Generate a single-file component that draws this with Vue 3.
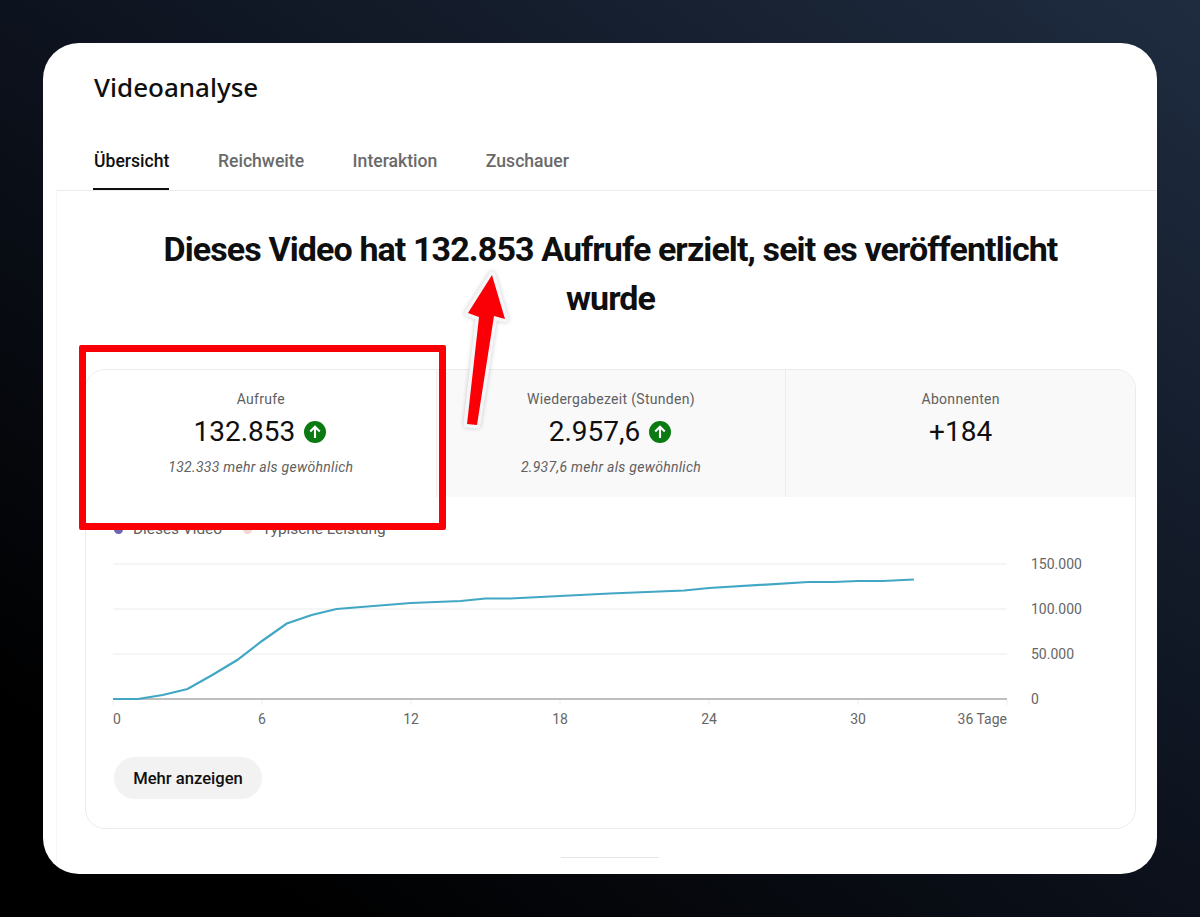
<script setup>
const stats = [
  { label: "Aufrufe", value: "132.853", up: true, note: "132.333 mehr als gewöhnlich", active: true },
  { label: "Wiedergabezeit (Stunden)", value: "2.957,6", up: true, note: "2.937,6 mehr als gewöhnlich" },
  { label: "Abonnenten", value: "+184" },
];

const tabs = ["Übersicht", "Reichweite", "Interaktion", "Zuschauer"];

// chart area is 894 wide, 36 days; y in px from the top of the svg
const dayWidth = 894 / 36;
const curve = [
  [0, 136], [1, 136], [2, 132], [3, 126], [4, 112], [5, 97], [6, 78], [7, 60.5], [8, 52], [9, 46],
  [10, 44], [11, 42], [12, 40], [14, 38], [15, 35.5], [16, 35.5], [18, 33], [20, 30.5], [23, 27.5],
  [24, 25], [28, 19], [29, 19], [30, 18], [31, 18], [32.25, 16.5],
];
const linePoints = curve.map(([d, y]) => `${(d * dayWidth).toFixed(1)},${y}`).join(" ");

const grid = [
  { y: 1, label: "150.000" },
  { y: 46, label: "100.000" },
  { y: 91, label: "50.000" },
  { y: 136, label: "0" },
];
const xTicks = [0, 6, 12, 18, 24, 30];
</script>

<template>
  <div class="page">
    <div class="card">
      <h1 class="title">Videoanalyse</h1>

      <nav class="tabs">
        <a v-for="(tab, i) in tabs" :key="tab" :class="['tab', { active: i === 0 }]">{{ tab }}</a>
      </nav>

      <div class="content">
        <h2 class="headline">Dieses Video hat 132.853 Aufrufe erzielt, seit es veröffentlicht wurde</h2>

        <section class="panel">
          <div class="stats">
            <div v-for="s in stats" :key="s.label" :class="['stat', { active: s.active }]">
              <div class="stat-label">{{ s.label }}</div>
              <div class="stat-value">
                <span>{{ s.value }}</span>
                <svg v-if="s.up" class="up" viewBox="0 0 24 24">
                  <circle cx="12" cy="12" r="12" fill="#0b7a12" />
                  <path d="M12 18.5V6.5M6.8 11.5 12 6.3l5.2 5.2" fill="none" stroke="#fff" stroke-width="2.3" />
                </svg>
              </div>
              <div v-if="s.note" class="stat-note">{{ s.note }}</div>
            </div>
          </div>

          <div class="chart-wrap">
            <div class="legend">
              <span class="legend-item"><i class="dot purple"></i>Dieses Video</span>
              <span class="legend-item"><i class="dot pale"></i>Typische Leistung</span>
            </div>

            <svg class="chart" width="1000" height="165" viewBox="0 0 1000 165">
              <g v-for="g in grid" :key="g.label">
                <line
                  x1="0"
                  x2="894"
                  :y1="g.y"
                  :y2="g.y"
                  :stroke="g.y === 136 ? '#a8a8a8' : '#ebebeb'"
                  :stroke-width="g.y === 136 ? 1.5 : 1"
                />
                <text class="axis" x="918" :y="g.y + 5">{{ g.label }}</text>
              </g>
              <g v-for="t in xTicks" :key="t">
                <line :x1="t * dayWidth" :x2="t * dayWidth" y1="137" y2="142" stroke="#eeeeee" />
                <text class="axis" :x="t * dayWidth" y="161" :text-anchor="t === 0 ? 'start' : 'middle'">{{ t }}</text>
              </g>
              <line x1="894" x2="894" y1="137" y2="142" stroke="#eeeeee" />
              <text class="axis" x="894" y="161" text-anchor="end">36 Tage</text>
              <polyline :points="linePoints" fill="none" stroke="#41a7c4" stroke-width="2.2" />
            </svg>

            <button class="more">Mehr anzeigen</button>
          </div>
        </section>

        <div class="stub"></div>
      </div>

      <!-- annotations on top of the screenshot -->
      <div class="red-box"></div>
      <svg class="arrow" width="70" height="170" viewBox="0 0 70 170">
        <path
          d="M41 12 L54 56 L43 53 L26 162 L16 161 L28 54 L17 50 Z"
          fill="#fa0006"
          stroke="#f4f6f8"
          stroke-width="7"
          stroke-linejoin="round"
          paint-order="stroke"
        />
      </svg>
    </div>
  </div>
</template>

<style>
body {
  background: #000;
}
</style>

<style scoped>
.page {
  box-sizing: border-box;
  width: 1200px;
  height: 917px;
  padding: 43px;
  background: linear-gradient(35deg, #000 12%, #0e1420 55%, #1f2c40 100%);
  font-family: Roboto, "Liberation Sans", sans-serif;
  overflow: hidden;
}

.card {
  position: relative;
  height: 831px;
  background: #fff;
  border-radius: 36px;
  overflow: hidden;
}

.title {
  margin: 0;
  padding: 25px 0 0 51px;
  font-family: "Noto Sans", Roboto, sans-serif;
  font-size: 26px;
  line-height: 38px;
  font-weight: 500;
  color: #0f0f0f;
}

.tabs {
  display: flex;
  gap: 47.5px;
  margin: 31px 0 0 13px;
  padding-left: 37px;
  height: 53px;
  border-bottom: 1px solid #ececec;
}

.tab {
  height: 53px;
  box-sizing: border-box;
  padding: 12px 0 0 1px;
  font-size: 17.6px;
  line-height: 24px;
  font-weight: 500;
  color: #6a6a6a;
}

.tab.active {
  color: #0f0f0f;
  border-bottom: 2px solid #0f0f0f;
}

.content {
  margin-left: 13px;
  padding: 34px 21px 0 28px;
  border-left: 1px solid #f6f6f6;
  height: 644px;
}

.headline {
  width: 940px;
  margin: 0 auto;
  text-align: center;
  font-size: 34px;
  line-height: 49px;
  font-weight: 700;
  letter-spacing: -0.9px;
  color: #0f0f0f;
}

.panel {
  margin-top: 46px;
  height: 460px;
  box-sizing: border-box;
  border: 1px solid #ebebeb;
  border-radius: 20px;
  overflow: hidden;
}

.stats {
  display: grid;
  grid-template-columns: repeat(3, 1fr);
  height: 127px;
}

.stat {
  background: #f9f9f9;
  border-left: 1px solid #ececec;
  text-align: center;
  padding-top: 20px;
  box-sizing: border-box;
}

.stat:first-child {
  border-left: 0;
}

.stat.active {
  background: #fff;
}

.stat-label {
  font-size: 14px;
  line-height: 18px;
  color: #606060;
  letter-spacing: 0.3px;
}

.stat-value {
  display: flex;
  justify-content: center;
  align-items: center;
  gap: 9px;
  margin-top: 6px;
  font-size: 28px;
  line-height: 36px;
  color: #0f0f0f;
}

.up {
  width: 22px;
  height: 22px;
  margin-right: 2px;
}

.stat-note {
  margin-top: 8px;
  font-size: 14px;
  line-height: 18px;
  font-style: italic;
  color: #606060;
  letter-spacing: 0.28px;
}

.chart-wrap {
  padding-left: 27px;
}

.legend {
  display: flex;
  gap: 21px;
  height: 18px;
  margin: 23px 0 0 1px;
  font-size: 15.4px;
  line-height: 18px;
  color: #606060;
}

.legend-item {
  display: flex;
  align-items: center;
  gap: 10px;
}

.dot {
  width: 9px;
  height: 9px;
  border-radius: 50%;
}

.dot.purple {
  background: #6a63b8;
}

.dot.pale {
  background: #f3d6cf;
}

.chart {
  display: block;
  margin-top: 25px;
  overflow: visible;
}

.axis {
  font-size: 14px;
  fill: #666;
}

.more {
  display: block;
  margin: 29px 0 0 1px;
  width: 148px;
  height: 42px;
  padding: 0;
  border: 0;
  border-radius: 21px;
  background: #f2f2f2;
  font-family: inherit;
  font-size: 16.6px;
  font-weight: 500;
  color: #0f0f0f;
}

.stub {
  width: 98px;
  margin: 28px auto 0;
  position: relative;
  left: -1px;
  border-top: 1px solid #e5e5e5;
}

.red-box {
  position: absolute;
  left: 36px;
  top: 302px;
  width: 367px;
  height: 185px;
  box-sizing: border-box;
  border: 7px solid #fa0006;
  border-radius: 2px;
}

.arrow {
  position: absolute;
  left: 408px;
  top: 220px;
  filter: drop-shadow(0 0 2px rgba(0, 0, 0, 0.2));
}
</style>
